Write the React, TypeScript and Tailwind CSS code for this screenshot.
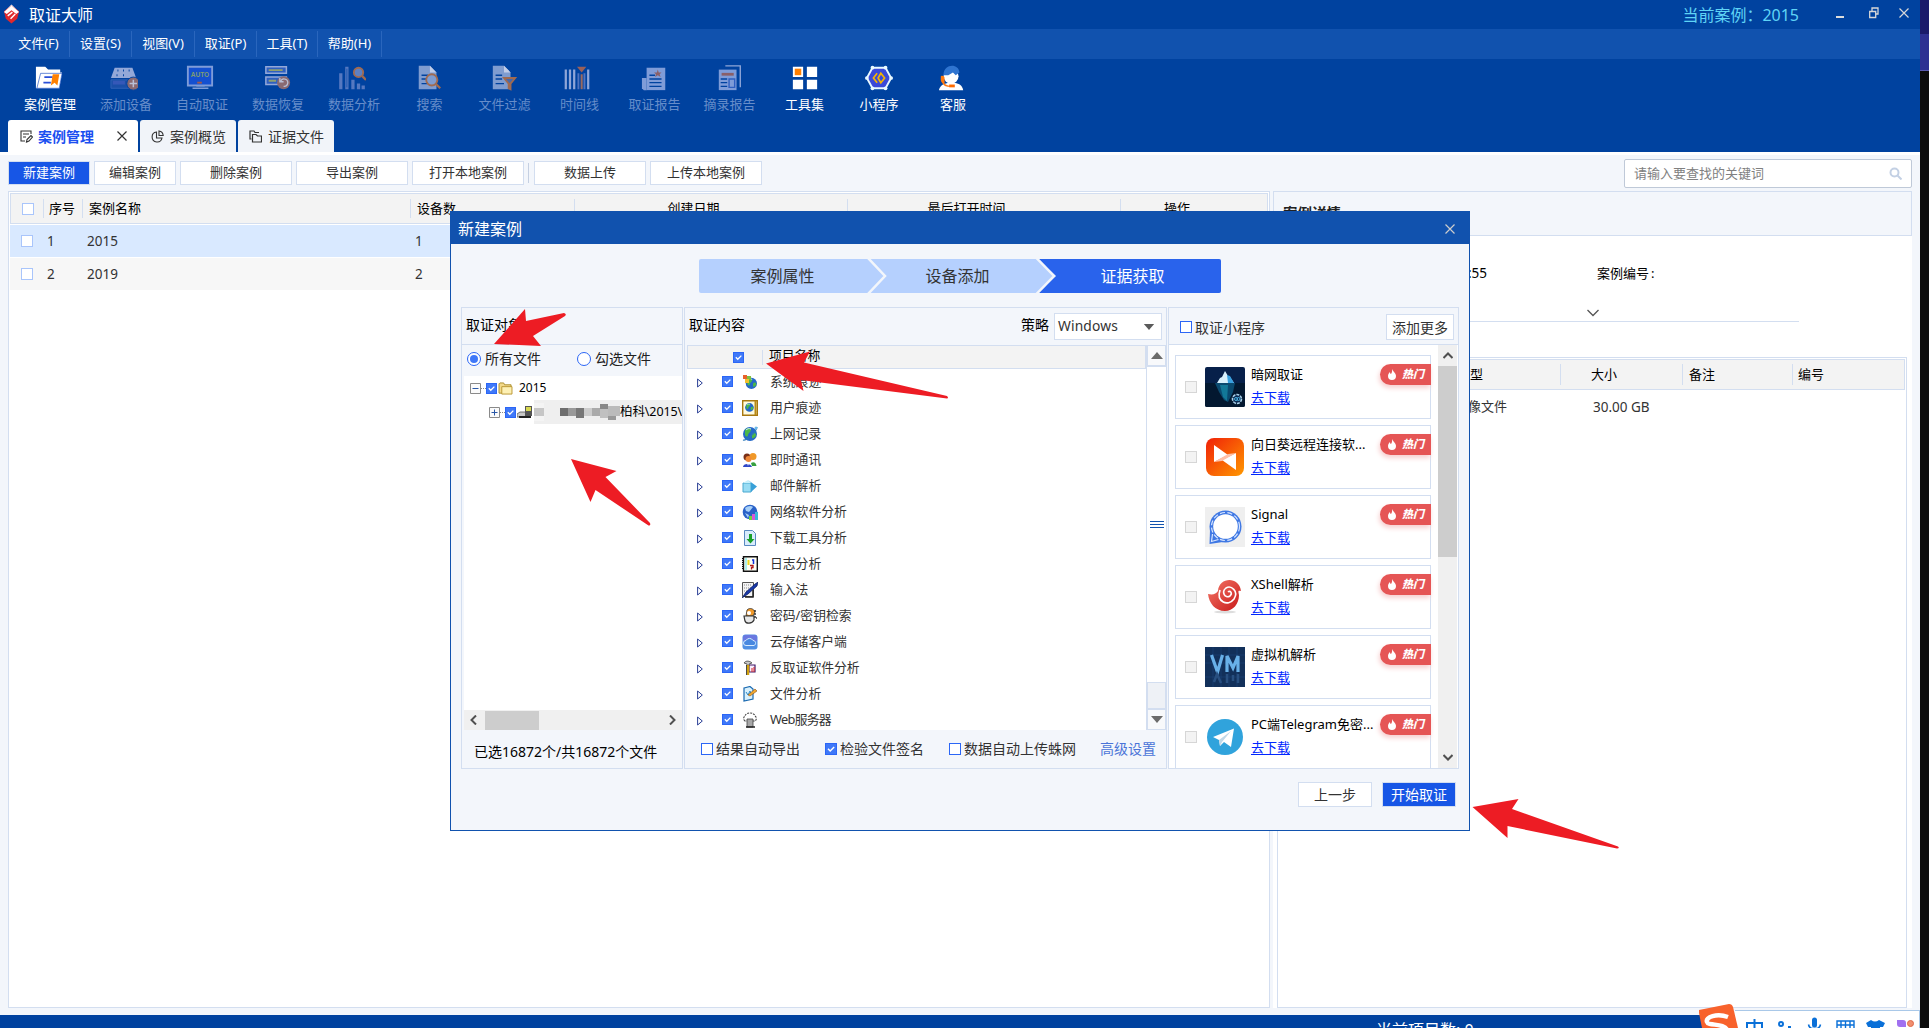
import React from "react";

type Kids = { children?: React.ReactNode };

/* ---------- small controls ---------- */

const Tick = ({ className }: { className: string }) => (
  <span className={"flex shrink-0 items-center justify-center border border-[#2b66f6] bg-[#3f78f8] " + className}>
    <svg viewBox="0 0 11 11" className="h-full w-full" fill="none" stroke="#fff" strokeWidth="1.6">
      <path d="M2.2 5.2 4.6 7.6 9 3.2" />
    </svg>
  </span>
);

const Box = ({ className }: { className: string }) => <span className={"shrink-0 border bg-white " + className} />;

const Close = ({ className }: { className: string }) => (
  <svg viewBox="0 0 10 10" className={className} fill="none" stroke="currentColor" strokeWidth="1.2">
    <path d="M.5.5 9.5 9.5M9.5.5.5 9.5" />
  </svg>
);

/* ---------- toolbar ---------- */

const toolIcons: Record<string, React.ReactNode> = {
  案例管理: (
    <>
      <path d="M1 3h10l3 3h13v3h2l-3 17H1z" fill="#fff" />
      <path d="M2 26 6 10h23l-3 16z" fill="#fff" stroke="#1a4fc0" strokeWidth=".7" />
      <path d="M10 14h9M9 20h8" stroke="#2a4fd8" strokeWidth="2" />
      <path d="M19 11h7l-2 12-3-3-4 3z" fill="#ff8000" />
    </>
  ),
  添加设备: (
    <>
      <path d="M5 4h19l4 11H1z" fill="#93a8d8" />
      <path d="M8 7h1M14 7h1M20 7h1M7 12h1M14 12h1" stroke="#00429f" strokeWidth="2" />
      <path d="M1 17h27v9H1z" fill="#1a4fa8" stroke="#3264b8" />
      <path d="M3 18h13v4H3z" fill="#3558b8" />
      <circle cx="25" cy="21" r="7" fill="#8a6a72" stroke="#00429f" />
      <path d="M25 17v8M21 21h8" stroke="#b9bfd6" strokeWidth="1.6" />
    </>
  ),
  自动取证: (
    <>
      <path d="M2 3h26v20H2z" fill="#1450d0" stroke="#7f9cd8" strokeWidth="2" />
      <path d="M7 26h17M11 23.500h9" stroke="#7f9cd8" strokeWidth="1.4" />
      <path d="M12 20h5" stroke="#a05a50" strokeWidth="2" />
      <text x="15" y="14" textAnchor="middle" fontSize="7" fontFamily="Liberation Sans" fontWeight="bold" fill="#7f9c70">AUTO</text>
    </>
  ),
  数据恢复: (
    <>
      <path d="M2 3h22v7H2zM2 14h22v8H2z" fill="#2f5fc0" stroke="#93a8d8" strokeWidth="1.6" />
      <path d="M5 6.500h15M5 18h8" stroke="#8fa070" strokeWidth="2" />
      <circle cx="21" cy="20" r="7" fill="#8a6a72" />
      <path d="M18 18a4 4 0 1 1 3 6M17 15v4h4" fill="none" stroke="#b9bfd6" strokeWidth="1.4" />
    </>
  ),
  数据分析: (
    <>
      <path d="M3 10v17M9.500 3v24M16 17v10M22 21v6M27 23v4" stroke="#5578c0" strokeWidth="3.500" />
      <path d="M9.500 5v20" stroke="#1a56b0" strokeWidth="1" />
      <circle cx="22" cy="9" r="5" fill="#5f80c0" stroke="#a06a50" strokeWidth="2" />
      <path d="m26 13 4 4" stroke="#a06a50" strokeWidth="2.500" />
    </>
  ),
  搜索: (
    <>
      <path d="M4 2h12l7 7v18H4z" fill="#7f9cd0" />
      <path d="M16 2v7h7" fill="#c0cce8" />
      <path d="M7 12h7M7 16h5M7 21h6" stroke="#00429f" strokeWidth="1.500" />
      <circle cx="18" cy="17" r="6" fill="#7f9cd0" stroke="#a06a50" strokeWidth="2" />
      <path d="m22 21 5 5" stroke="#a06a50" strokeWidth="2.500" />
    </>
  ),
  文件过滤: (
    <>
      <path d="M3 2h12l7 7v18H3z" fill="#7f9cd0" />
      <path d="M15 2v7h7" fill="#c0cce8" />
      <path d="M6 12h7M6 16h7M6 21h9" stroke="#00429f" strokeWidth="1.500" />
      <path d="M15 15h12l-5 6v6l-2-1v-5z" fill="#4a68a8" stroke="#a06a50" strokeWidth="2" />
    </>
  ),
  时间线: (
    <>
      <path d="M3 6v21M7.500 6v21M12 6v21M27 6v21" stroke="#8fa6d8" strokeWidth="2.400" />
      <path d="M16.500 10v17M23 10v17" stroke="#4f74c0" strokeWidth="2" />
      <path d="M20 11v16" stroke="#9a6a60" strokeWidth="2.200" />
      <path d="M15 3h10l-5 6z" fill="#9a6058" />
    </>
  ),
  取证报告: (
    <>
      <path d="M6 4h20v24H6z" fill="#7f9cd8" />
      <path d="M1 15h5v13H3l-2-2z" fill="#7f9cd8" />
      <path d="M9 12h6M9 16h13M9 20h13M9 24h13" stroke="#00429f" strokeWidth="1.500" />
      <path d="m18 6 1 3h3l-2 2 1 3-3-2-3 2 1-3-2-2h3z" fill="#8a5f68" />
    </>
  ),
  摘录报告: (
    <>
      <path d="M10 2h16v23" fill="none" stroke="#8fa6d8" strokeWidth="1.500" />
      <path d="M3 6h19v22H3z" fill="#7f9cd8" />
      <path d="M6 11h13" stroke="#8a5f68" strokeWidth="3" />
      <path d="M5 16h7M5 20h7M5 24h7" stroke="#00429f" strokeWidth="1.500" />
      <path d="M14 16h6v9h-6z" fill="none" stroke="#2f5fc0" strokeWidth="1.500" />
    </>
  ),
  工具集: (
    <>
      <path d="M2 3h11v11H2zM17 3h11v11H17zM2 17h11v10H2zM17 17h11v10H17z" fill="#fff" />
      <path d="M4 5h7v7H4z" fill="#ff7f00" />
    </>
  ),
  小程序: (
    <>
      <path d="M8 4h14l6 11-6 11H8L2 15z" fill="#3a49d8" stroke="#e8f8ff" strokeWidth="2" />
      <g fill="#e8f8ff">
        <circle cx="8" cy="4" r="2" /><circle cx="22" cy="4" r="2" /><circle cx="28" cy="15" r="2" />
        <circle cx="22" cy="26" r="2" /><circle cx="8" cy="26" r="2" /><circle cx="2" cy="15" r="2" />
      </g>
      <path d="m13 10-4 5 4 5M17 10l4 5-4 5-3-5z" fill="none" stroke="#f5b400" strokeWidth="1.800" />
    </>
  ),
  客服: (
    <>
      <path d="M1 28c1-5 5-7 10-8h7c5 1 8 3 9 8z" fill="#fff" />
      <circle cx="14" cy="13" r="8" fill="#fff" />
      <path d="M6 12c-1-12 16-14 17-3l-4 3-3-3-5 3z" fill="#2f74d0" />
      <path d="M3 13c2-1 4 0 4 2v6c-3 0-4-2-4-4z" fill="#ff7a10" />
      <path d="M5 19c1 4 4 5 9 5" stroke="#ff7a10" strokeWidth="1.500" fill="none" />
      <path d="M12 22h6v3h-6z" fill="#ff6a00" />
    </>
  ),
};

/* label, enabled, column width, icon nudge */
const tools: [string, boolean, string, string][] = [
  ["案例管理", true, "w-[76px]", "mr-[2px]"],
  ["添加设备", false, "w-[76px]", "mr-[4px]"],
  ["自动取证", false, "w-[76px]", "mr-[4px]"],
  ["数据恢复", false, "w-[76px]", ""],
  ["数据分析", false, "w-[76px]", "mr-[4px]"],
  ["搜索", false, "w-[75px]", "mr-[2px]"],
  ["文件过滤", false, "w-[75px]", "mr-[2px]"],
  ["时间线", false, "w-[75px]", "mr-[6px]"],
  ["取证报告", false, "w-[75px]", ""],
  ["摘录报告", false, "w-[75px]", ""],
  ["工具集", true, "w-[75px]", ""],
  ["小程序", true, "w-[74px]", "mr-[1px]"],
  ["客服", true, "w-[74px]", "mr-[3px]"],
];

const Header = () => (
  <header className="h-[152px] bg-[#00429f] text-white">
    <div className="flex h-[29px] items-center">
      <svg viewBox="0 0 18 20" className="ml-[3px] mb-[2px] h-[20px] w-[17px]">
        <path d="M9 0 17 8 9 11 1 8z" fill="#fff" />
        <path d="M1 7 9 1l8 6-2 8-6 5-6-5z" fill="#e0282c" />
        <path d="M9 1 17 8l-3 2-5-4-5 4-3-2z" fill="#fff" />
        <path d="m5 12 5-4M8 15l5-5" stroke="#fff" strokeWidth="1.500" />
      </svg>
      <span className="ml-[9px] text-[16px] leading-[28px]">取证大师</span>
      <span className="ml-auto text-[16px] leading-[28px] text-[#5fd4f6]">当前案例：2015</span>
      <span className="ml-[37px] mt-[4px] h-[2px] w-[8px] bg-[#dcdcdc]" />
      <svg viewBox="0 0 10 12" className="ml-[25px] mb-[4px] h-[12px] w-[10px]" fill="none" stroke="#d8d8d8" strokeWidth="1.300">
        <path d="M3 4V1h6v6H7M.700 4.500h6v6h-6z" />
      </svg>
      <Close className="ml-[20px] mr-[11px] mb-[4px] h-[10px] w-[10px] text-[#d8d8d8]" />
    </div>
    <div className="flex h-[30px] items-center bg-[#1152ae] text-[13px]">
      {[
        ["文件(F)", "w-[70px] pl-[8px]"],
        ["设置(S)", "w-[62px]"],
        ["视图(V)", "w-[63px]"],
        ["取证(P)", "w-[62px]"],
        ["工具(T)", "w-[61px]"],
        ["帮助(H)", "w-[64px]"],
      ].map(([t, w]) => (
        <span key={t} className={"flex h-[26px] items-center justify-center border-r border-[#2a66bd] " + w}>{t}</span>
      ))}
    </div>
    <div className="flex h-[61px] pl-[12px]">
      {tools.map(([t, on, w, nudge]) => (
        <div key={t} className={"flex flex-col items-center pt-[5px] " + w}>
          <svg viewBox="0 0 30 30" className={"h-[28px] w-[28px] " + nudge}>{toolIcons[t]}</svg>
          <span className={"mt-[3px] text-[13px] leading-[18px] " + (on ? "text-white" : "text-[#668dca]")}>{t}</span>
        </div>
      ))}
    </div>
    <div className="flex h-[32px] gap-[2px] pl-[8px] text-[14px]">
      <div className="flex w-[130px] items-center rounded-t-[3px] bg-white pl-[12px] pr-[11px]">
        <svg viewBox="0 0 13 13" className="h-[13px] w-[13px]" fill="none" stroke="#333" strokeWidth="1.100">
          <path d="M11 4V1H1v10h4M3 4h6M3 7h3M6.500 12l.5-2.500L11 5.500l1.500 1.500L9 11z" />
        </svg>
        <span className="ml-[5px] font-bold text-[#1b4ff0]">案例管理</span>
        <Close className="ml-auto h-[10px] w-[10px] text-[#333]" />
      </div>
      <div className="flex w-[96px] items-center rounded-t-[3px] bg-[#f1f4f9] pl-[11px] text-[#333]">
        <svg viewBox="0 0 13 13" className="mr-[6px] h-[13px] w-[13px]" fill="none" stroke="#333" strokeWidth="1.100">
          <path d="M5.500 2A5 5 0 1 0 11 8H5.500zM8 1v4.500h4.200A5 5 0 0 0 8 1z" />
        </svg>
        案例概览
      </div>
      <div className="flex w-[96px] items-center rounded-t-[3px] bg-[#f1f4f9] pl-[11px] text-[#333]">
        <svg viewBox="0 0 13 13" className="mr-[6px] h-[13px] w-[13px]" fill="none" stroke="#333" strokeWidth="1.200">
          <path d="M2.500 9H1V1h4l1 1.500h4M3.500 12V4.500h3.500L8.500 6h4v6z" />
        </svg>
        证据文件
      </div>
    </div>
  </header>
);

/* ---------- case list page ---------- */

const Btn = ({ w, children }: { w: string } & Kids) => (
  <span className={"flex h-[24px] items-center justify-center border border-[#d3def0] bg-white text-[13px] text-[#333] " + w}>{children}</span>
);

const ActionBar = () => (
  <div className="flex h-[36px] items-start pt-[6px]">
    <span className="ml-[8px] mr-[4px] flex h-[24px] w-[82px] items-center justify-center border border-[#d3def0] bg-[#1756e6] text-[13px] text-white">新建案例</span>
    <div className="flex gap-[4px]">
      <Btn w="w-[82px]">编辑案例</Btn>
      <Btn w="w-[112px]">删除案例</Btn>
      <Btn w="w-[112px]">导出案例</Btn>
      <Btn w="w-[112px]">打开本地案例</Btn>
      <span className="mt-[2px] h-[20px] w-px bg-[#c5d0e2]" />
      <Btn w="ml-[1px] w-[112px]">数据上传</Btn>
      <Btn w="w-[112px]">上传本地案例</Btn>
    </div>
    <div className="ml-auto mr-[8px] -mt-[2px] flex h-[29px] w-[288px] items-center justify-between rounded-[2px] border border-[#bfc9d8] bg-white pl-[9px] pr-[9px] text-[13px] text-[#808080]">
      请输入要查找的关键词
      <svg viewBox="0 0 13 13" className="h-[13px] w-[13px]" fill="none" stroke="#c3d0e4" strokeWidth="2">
        <circle cx="5.500" cy="5.500" r="4" /><path d="m8.500 8.500 4 4" />
      </svg>
    </div>
  </div>
);

const cols = "grid grid-cols-[32px_39px_328px_164px_273px_273px_1fr] items-center";

const CaseTable = () => (
  <section className="h-[817px] w-[1262px] border border-[#d3def0] bg-white p-px">
    <div className={cols + " h-[31px] border border-[#d3def0] bg-[#f3f3f3] text-[13px] text-black"}>
      <Box className="ml-[11px] h-[12px] w-[12px] border-[#a9c5fb]" />
      <span className="border-l border-[#d3def0] pl-[5px]">序号</span>
      <span className="border-l border-[#d3def0] pl-[6px]">案例名称</span>
      <span className="border-l border-[#d3def0] pl-[6px]">设备数</span>
      <span className="border-l border-[#d3def0] pr-[35px] text-center">创建日期</span>
      <span className="border-l border-[#d3def0] pr-[35px] text-center">最后打开时间</span>
      <span className="border-l border-[#d3def0] pl-[43px]">操作</span>
    </div>
    {[
      ["1", "2015", "1", "bg-[#d9e9ff]"],
      ["2", "2019", "2", "bg-[#f7f7f7]"],
    ].map(([n, name, d, bg]) => (
      <div key={n} className={cols + " mt-px h-[32px] text-[13.500px] text-[#333] " + bg}>
        <Box className="ml-[11px] h-[12px] w-[12px] border-[#a9c5fb]" />
        <span className="pl-[5px]">{n}</span>
        <span className="pl-[6px]">{name}</span>
        <span className="pl-[6px]">{d}</span>
      </div>
    ))}
  </section>
);

const Details = () => (
  <section className="ml-[3px] flex h-[817px] w-[639px] flex-col bg-white">
    <div className="h-[45px] shrink-0 border border-[#d3def0] bg-[#f3f6fb] pl-[9px] text-[14.500px] font-bold leading-[43px] text-[#222]">案例详情</div>
    <div className="mr-[113px] flex h-[86px] shrink-0 flex-col border-b border-[#d3def0]">
      <div className="mt-[28px] flex text-[13px] leading-[18px] text-black">
        <span className="w-[214px] text-right text-[13.500px]">:55</span>
        <span className="ml-[110px]">案例编号<span className="pl-[2px]">:</span></span>
      </div>
      <svg viewBox="0 0 12 8" className="ml-[314px] mt-[27px] h-[8px] w-[12px]" fill="none" stroke="#555" strokeWidth="1.300">
        <path d="m.500 1 5.500 5.500L11.500 1" />
      </svg>
    </div>
    <div className="ml-[4px] mr-[5px] mt-[35px] flex-1 border border-[#d3def0] p-px">
      <div className="grid h-[31px] grid-cols-[280px_122px_110px_1fr] items-center border border-[#d3def0] bg-[#f3f3f3] text-[13px] text-black">
        <span className="pr-[77px] text-right">类型</span>
        <span className="flex h-[21px] items-center border-l border-[#d3def0] pl-[30px]">大小</span>
        <span className="flex h-[21px] items-center border-l border-[#d3def0] pl-[6px]">备注</span>
        <span className="flex h-[21px] items-center border-l border-[#d3def0] pl-[5px]">编号</span>
      </div>
      <div className="grid h-[34px] grid-cols-[280px_122px_1fr] items-center text-[13px] text-[#333]">
        <span className="pr-[52px] text-right">镜像文件</span>
        <span className="pl-[34px] text-[13.500px]">30.00 GB</span>
      </div>
    </div>
  </section>
);

/* ---------- dialog ---------- */

const Steps = () => (
  <div className="relative mx-auto flex h-[34px] w-[522px] overflow-hidden rounded-[2px] bg-[#b5d0fe] text-[16px] text-[#333]">
    <svg viewBox="0 0 522 34" className="absolute inset-0 h-[34px] w-[522px]">
      <path d="M339 0H522V34H339L357 17z" fill="#2963ec" />
      <path d="M169 -1 186 17 169 35M337.500 -1 355 17 337.500 35" fill="none" stroke="#f3f6fb" strokeWidth="2.500" />
    </svg>
    <span className="relative flex w-[167px] items-center justify-center">案例属性</span>
    <span className="relative flex w-[183px] items-center justify-center">设备添加</span>
    <span className="relative flex w-[167px] items-center justify-center text-white">证据获取</span>
  </div>
);

const Mosaic = () => (
  <svg viewBox="0 0 86 18" className="h-[18px] w-[86px] shrink-0" shapeRendering="crispEdges">
    <path d="M0 0h10v18H0z" fill="#f4f4f4" /><path d="M0 5h10v8H0z" fill="#c6c6c6" />
    <path d="M26 5h8v8h-8z" fill="#6e6e6e" /><path d="M34 5h8v8h-8z" fill="#999" />
    <path d="M42 5h8v10h-8z" fill="#777" /><path d="M50 5h8v8h-8z" fill="#ccc" />
    <path d="M58 5h8v8h-8z" fill="#aaa" /><path d="M66 1h8v5h-8z" fill="#888" />
    <path d="M66 6h8v9h-8z" fill="#c0c0c0" /><path d="M74 3h12v10H74z" fill="#bbb" />
    <path d="M74 13h8v4h-8z" fill="#999" />
  </svg>
);

const Expander = ({ plus }: { plus?: boolean }) => (
  <svg viewBox="0 0 11 11" className="h-[11px] w-[11px] shrink-0">
    <path d="M.500.500h10v10H.500z" fill="#fbfbfb" stroke="#8a8a8a" />
    <path d={plus ? "M2.500 5.500h6M5.500 2.500v6" : "M2.500 5.500h6"} stroke="#2a58a8" />
  </svg>
);

const Targets = () => (
  <div className="flex h-[462px] w-[222px] flex-col border border-[#d3def0]">
    <div className="h-[37px] shrink-0 border-b border-[#d3def0] pl-[4px] text-[14px] leading-[34px] text-black">取证对象</div>
    <div className="flex h-[31px] shrink-0 items-center pb-[4px] pl-[5px] text-[14px] text-[#222]">
      <span className="flex h-[14px] w-[14px] items-center justify-center rounded-full border border-[#2b66f6] bg-white">
        <span className="h-[8px] w-[8px] rounded-full bg-[#3f78f8]" />
      </span>
      <span className="ml-[4px]">所有文件</span>
      <span className="ml-[36px] h-[14px] w-[14px] rounded-full border border-[#2b66f6] bg-white" />
      <span className="ml-[4px]">勾选文件</span>
    </div>
    <div className="ml-[2px] flex h-[334px] shrink-0 flex-col overflow-hidden bg-white text-[13px] text-black">
      <div className="flex h-[24px] items-center pl-[6px]">
        <Expander />
        <span className="w-[5px] border-t border-dotted border-[#888]" />
        <Tick className="h-[11px] w-[11px]" />
        <svg viewBox="0 0 16 14" className="ml-px h-[13px] w-[15px]">
          <path d="M1 12V2l1-1h4l1 2h7v9z" fill="#f3d98a" stroke="#a88a2a" />
          <path d="M4 5h11v8H4z" fill="#fdf0b4" stroke="#b8942e" />
        </svg>
        <span className="ml-[6px] text-[12px] leading-[14px]">2015</span>
      </div>
      <div className="flex h-[24px] items-center pl-[25px]">
        <Expander plus />
        <span className="w-[5px] border-t border-dotted border-[#888]" />
        <Tick className="h-[11px] w-[11px]" />
        <svg viewBox="0 0 16 14" className="ml-px h-[14px] w-[16px] shrink-0">
          <path d="M0 9 3 7h8v5H0z" fill="#c8c8c8" stroke="#555" strokeWidth=".8" />
          <path d="M8 1h7v10H8z" fill="#555" /><path d="M9 2h5v4H9z" fill="#d8d850" />
          <path d="M2 12h12" stroke="#222" strokeWidth="2" />
        </svg>
        <div className="ml-[1px] flex h-[24px] w-[148px] shrink-0 items-center whitespace-nowrap bg-[#efefef]">
          <Mosaic />
          <span className="text-[12.500px] tracking-[-0.100px]">柏科\2015\</span>
        </div>
      </div>
    </div>
    <div className="ml-[2px] flex h-[20px] shrink-0 items-center bg-[#f0f0f0] px-[6px]">
      <svg viewBox="0 0 7 10" className="h-[10px] w-[7px]" fill="none" stroke="#505050" strokeWidth="2"><path d="M6 .500 1.500 5 6 9.500" /></svg>
      <span className="ml-[8px] h-[19px] w-[54px] bg-[#cdcdcd]" />
      <svg viewBox="0 0 7 10" className="ml-auto h-[10px] w-[7px]" fill="none" stroke="#505050" strokeWidth="2"><path d="M1 .500 5.500 5 1 9.500" /></svg>
    </div>
    <div className="h-[38px] whitespace-nowrap pl-[12px] text-[14px] leading-[44px] text-black">已选16872个/共16872个文件</div>
  </div>
);

const Globe = () => (
  <>
    <circle cx="8" cy="8" r="7" fill="#2468c8" />
    <path d="M3 4c3-3 6-2 6 0S6 7 6 9s-2 2-3 0zM10 8c2-2 4-1 4 1s-3 4-4 3z" fill="#4cb848" />
    <path d="M4 4c1-1 3-2 5-1" stroke="#cfe8ff" fill="none" />
  </>
);

const contents: [string, React.ReactNode][] = [
  ["系统痕迹", <><g transform="translate(3 3) scale(.8)"><Globe /></g><path d="M1 1h4v4H1z" fill="#e8622a" /><path d="M5 2h4v4H5z" fill="#7cc040" /><path d="M3 5h4v4H3z" fill="#f0c030" /></>],
  ["用户痕迹", <><path d="M.700.700h14.600v14.600H.700z" fill="#fffbe0" stroke="#a87810" strokeWidth="1.400" /><path d="M13.500 1v14" stroke="#b88a18" strokeWidth="2" /><g transform="translate(2.500 2.500) scale(.62)"><Globe /></g></>],
  ["上网记录", <><Globe /><path d="M1 14C4 15 14 7 15 1" fill="none" stroke="#2a78b8" strokeWidth="1.200" /><circle cx="14" cy="2" r="1.500" fill="#68b8e8" /></>],
  ["即时通讯", <><circle cx="5" cy="5" r="3.500" fill="#7a3018" /><circle cx="11" cy="4.500" r="3.500" fill="#f09828" /><circle cx="6.500" cy="7" r="3" fill="#f08838" /><path d="M1 15c0-4 8-4 9 0z" fill="#3048c8" /><path d="M5 11h2l-1 3z" fill="#fff" /><path d="M9 11c3-2 5 0 5.500 3H10z" fill="#38a040" /></>],
  ["邮件解析", <><path d="M1 5h8v9H1z" fill="#98dcf4" stroke="#48a8d0" /><path d="M6 2 15 8.500 9 14V5z" fill="#38a0d8" /><path d="M1 5 6 2l3 3z" fill="#c8f0fc" /></>],
  ["网络软件分析", <><circle cx="8" cy="8" r="7.300" fill="#2a62c8" /><path d="M3 4c2-2 6-3 8-1L7 8 4 7zM3 9l4 2-1 3z" fill="#a8d0f8" /><path d="M7 12h3v4H7z" fill="#70d040" /><path d="M10 10h3v6h-3z" fill="#d858d8" /><path d="M13 8h3v8h-3z" fill="#38b8d8" /></>],
  ["下载工具分析", <><path d="M2.500.500h8l3 3v12h-11z" fill="#d8ecfc" stroke="#5888c0" /><path d="M7 4h3v5h2.500l-4 4.500L4.500 9H7z" fill="#18a028" /></>],
  ["日志分析", <><path d="M1.500.700h13.800v14.600H1.500z" fill="#fffff4" stroke="#111" strokeWidth="1.400" /><path d="M.500 2v12" stroke="#111" strokeDasharray="1 1" /><path d="M4 2v12" stroke="#58e0e8" /><path d="M5.500 4h2v5h-2z" fill="#f0d820" /><path d="M10 4h1.500v4" stroke="#1030d8" strokeWidth="1.500" fill="none" /><path d="M8 9.500h3v2H9.500v2" stroke="#b01818" strokeWidth="1.300" fill="none" /></>],
  ["输入法", <><path d="M.500.500h11v14H.500z" fill="#f4f4f4" stroke="#555" /><path d="M2 3h8M2 6h7M2 9h5" stroke="#888" strokeDasharray="1 1" /><path d="M0 16 4 10 13 2l3-2-1 4-9 8z" fill="#1838a8" stroke="#081858" strokeWidth=".7" /><path d="M11 8v7H3" stroke="#222" strokeWidth="1.500" fill="none" /></>],
  ["密码/密钥检索", <><path d="M5 2c3-3 7-1 8 2l-2 4H4z" fill="#f09828" stroke="#333" strokeWidth=".8" /><circle cx="7" cy="5" r="2" fill="#fff" /><path d="M2 8h10v4c-2 4-8 4-9 1z" fill="#e8e8e8" stroke="#333" strokeWidth="1.200" /><path d="M13 2v8h2" stroke="#333" strokeWidth="1.500" fill="none" strokeDasharray="2 1" /></>],
  ["云存储客户端", <><rect x=".500" y=".500" width="15" height="15" rx="3" fill="#5090e4" /><path d="M1 4a3 3 0 0 1 3-3h8a3 3 0 0 1 3 3v3H1z" fill="#6a78e0" /><path d="M4 11.500a2.500 2.500 0 0 1 0-5 4 4 0 0 1 7 0c3 0 3.500 4 1 5z" fill="#4888e0" stroke="#d8ecff" /></>],
  ["反取证软件分析", <><path d="M7 5h6v7H7z" fill="#f8f0ff" stroke="#401868" strokeWidth="1.200" /><path d="M10 8v4M12 7v5" stroke="#d82020" /><path d="M2 3c2-3 6-2 8 0l-3 1v2H5V4z" fill="#c8c8c8" stroke="#444" strokeWidth=".8" /><path d="M6 5v10" stroke="#d0a010" strokeWidth="2.500" /><path d="M4.500 5v10" stroke="#222" strokeWidth=".8" /></>],
  ["文件分析", <><path d="M2 2 8 .500 11 3v10L2 15z" fill="#d8f0fc" stroke="#1868b0" strokeWidth="1.200" /><path d="m4 6 2 3 2-4 1 3" stroke="#2888c8" fill="none" /><path d="M6 9 13 3l2 2-7 5z" fill="#f0a830" stroke="#8a5018" strokeWidth=".6" /></>],
  ["Web服务器", <><path d="M3 9a3 3 0 0 1 0-5c1-4 9-4 10 0a3 3 0 0 1 0 5z" fill="#fff" stroke="#444" strokeWidth="1.100" strokeDasharray="2 1" /><path d="M5 7h6v8H5z" fill="#a8a8a8" stroke="#444" strokeWidth=".8" /><path d="M4 15h9" stroke="#222" strokeWidth="1.500" /></>],
];

const ScrollBtn = ({ up }: { up?: boolean }) => (
  <span className="flex h-[21px] items-center justify-center border border-[#d3def0] bg-[#f8f9fb]">
    <svg viewBox="0 0 12 7" className="h-[7px] w-[12px]"><path d={up ? "M0 7 6 0l6 7z" : "M0 0h12L6 7z"} fill="#6b6b6b" /></svg>
  </span>
);

const Contents = () => (
  <div className="ml-[1px] flex h-[462px] w-[483px] flex-col border border-[#d3def0]">
    <div className="flex h-[37px] items-center pl-[4px] pr-[4px] text-[14px] text-black">
      <span className="-mt-[4px]">取证内容</span>
      <span className="-mt-[4px] ml-auto">策略</span>
      <span className="ml-[5px] flex h-[27px] w-[108px] items-center justify-between border border-[#d3def0] bg-white pl-[3px] pr-[6px] text-[13.800px] tracking-[0.150px] text-[#333]">
        Windows
        <svg viewBox="0 0 12 7" className="h-[6px] w-[12px]"><path d="M0 0h12L6 7z" fill="#5a5a5a" /></svg>
      </span>
    </div>
    <div className="ml-[2px] flex h-[385px]">
      <div className="flex w-[459px] flex-col overflow-hidden bg-white text-[12.800px] text-[#333]">
        <div className="flex h-[24px] shrink-0 items-center border border-[#d3def0] bg-[#f3f3f3] pl-[45px] text-black">
          <Tick className="h-[11px] w-[11px]" />
          <span className="ml-[18px] h-[15px] w-px bg-[#d3def0]" />
          <span className="-mt-[2px] ml-[6px]">项目名称</span>
        </div>
        <div>
          {contents.map(([t, icon]) => (
            <div key={t} className="flex h-[26px] items-center pb-px pl-[10px]">
              <svg viewBox="0 0 6 10" className="mt-[3px] h-[10px] w-[6px]"><path d="M.600 1v8L5.300 5z" fill="#fff" stroke="#2a3f96" /></svg>
              <Tick className="ml-[19px] h-[11px] w-[11px]" />
              <svg viewBox="0 0 16 16" className="ml-[9px] mt-px h-[16px] w-[16px]">{icon}</svg>
              <span className={"-mt-px ml-[12px] leading-[18px] " + (t.startsWith("Web") ? "tracking-[-0.700px]" : "")}>{t}</span>
            </div>
          ))}
        </div>
      </div>
      <div className="flex flex-1 flex-col border-l border-[#d3def0] bg-white">
        <ScrollBtn up />
        <span className="h-px bg-[#d3def0]" />
        <div className="ml-[3px] mt-[154px] flex h-[7px] w-[14px] flex-col justify-between">
          <span className="h-px bg-[#1152ae]" /><span className="h-px bg-[#1152ae]" /><span className="h-px bg-[#1152ae]" />
        </div>
        <span className="mt-auto h-[27px] border border-[#d3def0] bg-[#eef1f6]" />
        <ScrollBtn />
      </div>
    </div>
    <div className="flex flex-1 items-center pb-px pl-[16px] text-[14px] text-[#333]">
      <Box className="h-[12px] w-[12px] border-[#2b66f6]" />
      <span className="ml-[3px]">结果自动导出</span>
      <Tick className="ml-[25px] h-[12px] w-[12px]" />
      <span className="ml-[3px]">检验文件签名</span>
      <Box className="ml-[25px] h-[12px] w-[12px] border-[#2b66f6]" />
      <span className="ml-[3px]">数据自动上传蛛网</span>
      <span className="ml-[24px] text-[#4a74d8]">高级设置</span>
    </div>
  </div>
);

const apps: [string, React.ReactNode][] = [
  ["暗网取证", <>
    <rect width="40" height="40" rx="2" fill="#07204a" /><path d="M0 16h40v22a2 2 0 0 1-2 2H2a2 2 0 0 1-2-2z" fill="#031830" />
    <path d="m12 16 3-5 2-1 3-6 3 5 2 1 4 6z" fill="#d8f0fc" /><path d="m22 8 3 1 4 7h-6z" fill="#38a0e0" />
    <path d="M10 16h20l-2 9-5 10-4-2-5-8z" fill="#0a4a70" /><path d="M15 18h8l-1 16-4-4z" fill="#127898" />
    <circle cx="32" cy="32" r="4.500" fill="#0a2850" stroke="#a8d0e8" strokeWidth="1.600" strokeDasharray="3 1" /><circle cx="31" cy="32" r="1.500" fill="none" stroke="#48b0e0" /><circle cx="33.500" cy="32" r="1.500" fill="none" stroke="#48b0e0" />
  </>],
  ["向日葵远程连接软...", <>
    <defs><linearGradient id="sun" x1="0" y1="0" x2="1" y2="1"><stop offset="0" stopColor="#f02008" /><stop offset="1" stopColor="#ff9800" /></linearGradient></defs>
    <rect x="1" y="1" width="38" height="38" rx="8" fill="url(#sun)" />
    <path d="m9 8 14 10L9 25zM31 16v17L17 23z" fill="#fff" /><path d="m9 25 14-8 8-1-14 8z" fill="#ffc0a8" />
  </>],
  ["Signal", <>
    <rect width="40" height="40" fill="#efefef" />
    <circle cx="20.500" cy="19.500" r="16" fill="#3f78e4" /><path d="M5 23 4.500 37 18 35z" fill="#3f78e4" />
    <circle cx="20.500" cy="19.500" r="14" fill="none" stroke="#d8e6ff" strokeWidth="1.200" strokeDasharray="5 2.500" />
    <path d="m7.500 27-1 7.500 7-2" fill="none" stroke="#d8e6ff" strokeWidth="1.200" />
    <circle cx="20.500" cy="19.500" r="12.300" fill="#fff" />
  </>],
  ["XShell解析", <>
    <defs><linearGradient id="shell" x1="0" y1="0" x2="1" y2="1"><stop offset="0" stopColor="#f47868" /><stop offset="1" stopColor="#c81818" /></linearGradient></defs>
    <ellipse cx="20" cy="35" rx="11" ry="1.500" fill="#ddd" />
    <path d="M3 17c5 1 8 0 10-3C14 0 34-1 36 14c-3-1-3 0-2 4C34 27 28 34 20 34 10 34 4 26 3 17z" fill="url(#shell)" />
    <path d="M15 13c-4 12 8 17 14 9 5-8-3-14-8-11-5 4-1 11 4 8 3-3 0-6-2-4" fill="none" stroke="#fff" strokeWidth="1.600" />
  </>],
  ["虚拟机解析", <>
    <rect width="40" height="40" fill="#12305a" /><path d="M0 8h40M0 16h40M0 30h40M8 0v40M16 0v40M24 0v40M32 0v40" stroke="#1c4478" strokeWidth=".600" />
    <path d="m6.500 8 6 17 5-17M22 25V9l6 12 5-12v16" fill="none" stroke="#68b0e8" strokeWidth="3.200" />
    <path d="m9 35 3-8 4 9M22 27v9M28 28v6M33 27v9" stroke="#284f80" strokeWidth="2.500" fill="none" />
  </>],
  ["PC端Telegram免密...", <>
    <circle cx="20" cy="20" r="18" fill="#30a3dc" /><path d="m8 20 21-8.500L26 30l-7-5-4 4-1-6z" fill="#fff" /><path d="m14 23 12-9-9 11-2 4z" fill="#c0d8e8" />
  </>],
];

const Apps = () => (
  <div className="ml-px flex h-[462px] w-[291px] flex-col border border-[#d3def0]">
    <div className="flex h-[37px] shrink-0 items-center border-b border-[#d3def0] pl-[11px] pr-[4px] pt-[2px] text-[14px] text-[#333]">
      <Box className="h-[12px] w-[12px] border-[#2b66f6]" />
      <span className="ml-[3px]">取证小程序</span>
      <span className="ml-auto flex h-[26px] w-[68px] items-center justify-center border border-[#d3def0] bg-white">添加更多</span>
    </div>
    <div className="flex min-h-0 flex-1 bg-white">
      <div className="flex flex-1 flex-col gap-[6px] overflow-hidden pl-[6px] pr-[7px] pt-[10px]">
        {apps.map(([t, logo]) => (
          <div key={t} className="flex h-[64px] shrink-0 items-start border border-[#d3def0] bg-white pl-[9px]">
            <span className="mt-[25px] h-[12px] w-[12px] border border-[#d6d6d6] bg-[#f3f3f3]" />
            <svg viewBox="0 0 40 40" className="ml-[8px] mt-[11px] h-[40px] w-[40px]">{logo}</svg>
            <div className="ml-[6px] mt-[8px] flex flex-col gap-[3px] whitespace-nowrap text-[13px] leading-[20px]">
              <span className="text-black">{t}</span>
              <span className="text-[#0026ff] underline underline-offset-2">去下载</span>
            </div>
            <span className="-mr-px ml-auto mt-[8px] flex h-[21px] w-[51px] shrink-0 items-center rounded-l-full bg-[#e55555] pl-[8px] text-[11px] font-black italic text-white shadow-[-1px_3px_5px_#f7cfcf]">
              <svg viewBox="0 0 8 11" className="mr-[6px] h-[11px] w-[8px]"><path d="M4.500 0c.5 3 3.500 4 3.500 7a4 4 0 0 1-8 0c0-2 1-3 2-4 0 1 .5 2 1 2 1-1 1-3 1.500-5z" fill="#fff" /></svg>
              热门
            </span>
          </div>
        ))}
      </div>
      <div className="mr-px flex w-[19px] flex-col items-center bg-[#f0f0f0] py-[7px]">
        <svg viewBox="0 0 10 7" className="h-[7px] w-[10px] shrink-0" fill="none" stroke="#505050" strokeWidth="2"><path d="M.500 6 5 1.500 9.500 6" /></svg>
        <span className="mt-[7px] h-[191px] w-full bg-[#cdcdcd]" />
        <svg viewBox="0 0 10 7" className="mt-auto h-[7px] w-[10px] shrink-0" fill="none" stroke="#505050" strokeWidth="2"><path d="M.500 1 5 5.500 9.500 1" /></svg>
      </div>
    </div>
  </div>
);

const Dialog = () => (
  <div className="absolute left-[450px] top-[211px] flex h-[620px] w-[1020px] flex-col border border-[#1152ae] bg-[#f3f6fb]">
    <div className="flex h-[32px] items-center justify-between bg-[#1152ae] pl-[7px] pr-[14px] pt-[1px] text-[16px] text-white">
      新建案例
      <Close className="mt-[1px] h-[10px] w-[10px] text-[#ccc]" />
    </div>
    <div className="mt-[15px]"><Steps /></div>
    <div className="ml-[10px] mt-[14px] flex">
      <Targets />
      <Contents />
      <Apps />
    </div>
    <div className="mr-[13px] mt-[13px] flex justify-end gap-[10px] text-[14px]">
      <span className="flex h-[25px] w-[74px] items-center justify-center border border-[#d3def0] bg-white text-[#333]">上一步</span>
      <span className="flex h-[25px] w-[74px] items-center justify-center border border-[#d3def0] bg-[#1756e6] text-white">开始取证</span>
    </div>
  </div>
);

const Arrows = () => (
  <svg viewBox="0 0 1929 1028" className="pointer-events-none absolute left-0 top-0 h-[1028px] w-[1929px]" fill="#ed1c24">
    <path d="M494 344 525 309 526 321 564 313Q567 314 565 316L533 336 541 346z" />
    <path d="M766 363.500 810 351.500 804 362.500 947 396Q949 398 947 398.500L801 380 803.500 391z" />
    <path d="M571 459 616.500 471 605.500 477 650 523Q651 526 648.500 525.500L595.500 490 590.500 502z" />
    <path d="M1472.500 807 1518.500 799 1512 809 1618 846.500Q1620 848.500 1617 848.500L1507.500 826 1507.500 838z" />
  </svg>
);

/* ---------- bottom bar ---------- */

const ImeBar = () => (
  <div className="absolute bottom-0 right-[9px] flex h-[18px] w-[185px] overflow-visible border-r border-t border-[#a9c8e8] bg-white">
    <svg viewBox="0 0 222 24" className="absolute -left-[36px] bottom-0 h-[24px] w-[222px]">
      <path d="M0 6 30 0q3 0 4 3l5 21H3L0 9z" fill="#f8622c" />
      <path d="M29 13C18 9 6 13 8 18c1 4 18 1 20 8" fill="none" stroke="#fff" strokeWidth="4.500" />
      <g fill="none" stroke="#0a70d8" strokeWidth="2">
        <path d="M48 19h15v7H48zM55.500 15v10" />
        <circle cx="82" cy="20" r="2" /><path d="M89 23.500h3" strokeWidth="3" />
        <path d="M115.500 16v5" strokeWidth="5" strokeLinecap="round" /><path d="M109.500 20.500q1 4 4 4h4q3 0 4-4" strokeWidth="1.600" />
        <path d="M138 24v-7h17v7M138 21h17M142 17v7M146.500 17v7M151 17v7" strokeWidth="1.400" />
      </g>
      <path d="m167 19 5-3q4 3 8 0l6 3-2 4h-3v2h-9v-2h-3z" fill="#0a70d8" />
      <path d="M198 16h6q3 0 3 3v4h-6q-3 0-3-3zM200 24h6v2h-6z" fill="#a070f0" />
      <circle cx="211.500" cy="19.500" r="3" fill="#f09070" stroke="#e06848" /><path d="M208 24h6v2h-6z" fill="#e07090" />
    </svg>
  </div>
);

export default function App() {
  return (
    <div className="relative flex h-[1028px] w-[1929px] overflow-hidden bg-[#0c0c0c] font-['Noto_Sans','Noto_Sans_CJK_SC',sans-serif]">
      <div className="flex w-[1920px] flex-col bg-[#f3f6fb]">
        <Header />
        <div className="h-[3px] bg-white" />
        <ActionBar />
        <div className="flex pl-[8px]">
          <CaseTable />
          <Details />
        </div>
        <div className="mt-auto h-[13px] overflow-hidden bg-[#00429f]">
          <span className="ml-[1376px] block pt-[5px] text-[16px] leading-[21px] text-white">当前项目数: 0</span>
        </div>
      </div>
      <div className="flex w-[9px] flex-col">
        <span className="h-[34px] bg-[#1b1b6b]" />
        <span className="h-[37px] border-b border-[#5a5ab0] bg-[#2e3192]" />
      </div>
      <ImeBar />
      <Dialog />
      <Arrows />
    </div>
  );
}
